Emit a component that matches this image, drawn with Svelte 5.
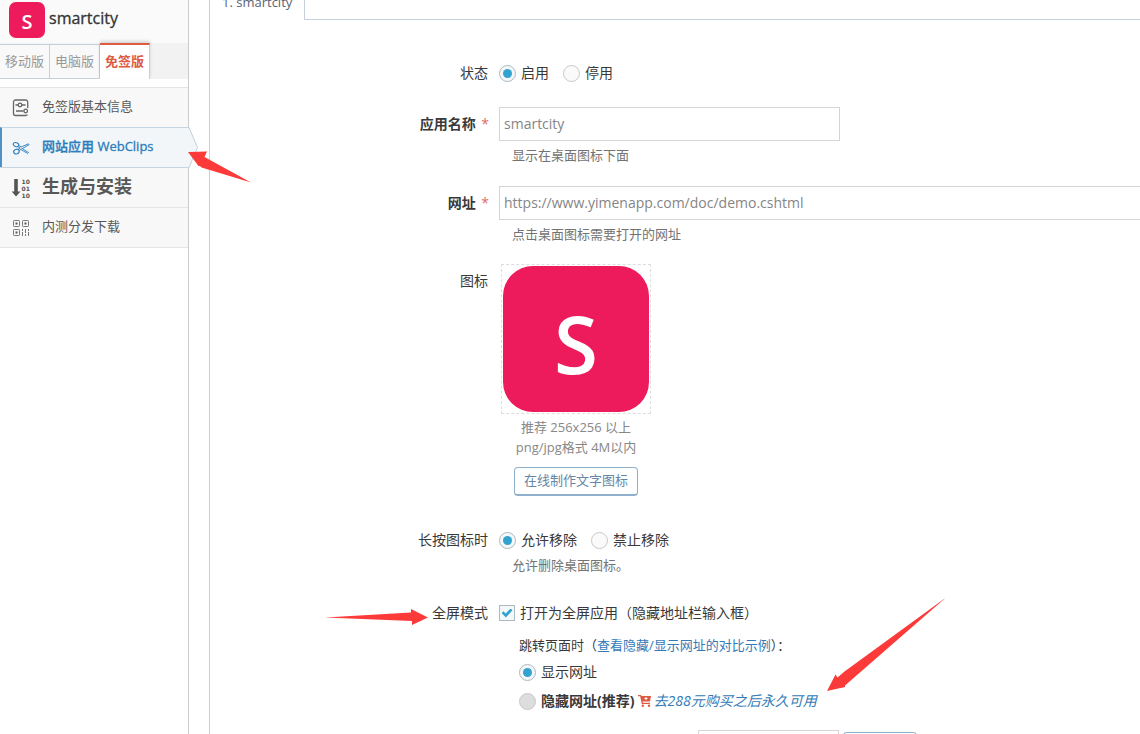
<script>
  let status = $state('on');
  let appName = $state('smartcity');
  let url = $state('https://www.yimenapp.com/doc/demo.cshtml');
  let removable = $state('yes');
  let fullscreen = $state(true);
  let urlMode = $state('show');
  const menu = [
    { id: 'info', text: '免签版基本信息' },
    { id: 'clips', text: '网站应用 WebClips', active: true },
    { id: 'build', text: '生成与安装', big: true },
    { id: 'dist', text: '内测分发下载' }
  ];
</script>

<div class="page">
  <aside>
    <header><span class="logo">S</span><strong>smartcity</strong></header>
    <nav class="platforms">
      <a href="#mobile">移动版</a>
      <a href="#desktop">电脑版</a>
      <a href="#free" class="current">免签版</a>
    </nav>
    <nav class="menu">
      {#each menu as item}
        <a href={'#' + item.id} class:active={item.active} class:big={item.big}>
          {#if item.id === 'info'}
            <svg width="18" height="18" viewBox="0 0 18 18" fill="none" stroke="#666" stroke-width="1.3">
              <path d="M15.700 9V3a2 2 0 0 0-2-2H3.500a2 2 0 0 0-2 2v11.500a2 2 0 0 0 2 2h10.200a2 2 0 0 0 1.700-1M3.500 6h2.700M9.800 6h3.700M4 12h7.500" />
              <circle cx="8" cy="6" r="1.800" /><circle cx="13.700" cy="12" r="1.800" />
            </svg>
          {:else if item.id === 'clips'}
            <svg width="18" height="18" viewBox="0 0 18 18" fill="none" stroke="#2b7dbc" stroke-width="1.1">
              <ellipse cx="4" cy="5.600" rx="2.800" ry="2" transform="rotate(15 4 5.600)" />
              <ellipse cx="4.400" cy="12.600" rx="2.800" ry="2.300" transform="rotate(-20 4.400 12.600)" />
              <path stroke-width=".9" d="M6.700 6.300L9 8l7.500-3.200.5.900L7 11.500M5.500 7.600l2.700 1.300L6 10.500M10.500 9.700l6 3.800-.8.900-6.500-3.600" />
            </svg>
          {:else if item.id === 'build'}
            <svg width="18" height="20" viewBox="0 0 18 20" fill="#555">
              <path d="M2.200 1h3.600v12.500h2.700L4 18.500-.3 13.500h2.500z" />
              <g font-family="DejaVu Sans, sans-serif" font-weight="700" font-size="6">
                <text x="9.500" y="5.500">10</text><text x="9.500" y="12.500">01</text><text x="9.500" y="19.500">10</text>
              </g>
            </svg>
          {:else}
            <svg width="18" height="18" viewBox="0 0 18 18" fill="none" stroke="#777" stroke-width="1">
              <rect x="1.500" y="1.500" width="6" height="6" rx=".8" />
              <rect x="10.500" y="1.500" width="6" height="6" rx=".8" />
              <rect x="1.500" y="10.500" width="6" height="6" rx=".8" />
              <path fill="#555" stroke="none" d="M3.500 3.500h2v2h-2zM12.500 3.500h2v2h-2zM3.500 12.500h2v2h-2z" />
              <path d="M10.500 10v2M10.500 13v4M13.500 10v4M13.500 15v2M16.500 10v2M16.500 13v4" />
            </svg>
          {/if}
          <span>{item.text}</span>
          {#if item.active}
            <svg class="tip" width="11" height="41" viewBox="0 0 11 41"><path d="M0 .5h1l8.500 20L1 40.500H0" fill="#f2f6f9" stroke="#bfd0dd" /></svg>
          {/if}
        </a>
      {/each}
    </nav>
  </aside>

  <main>
    <div class="tabs"><a href="#app1">1. smartcity</a></div>
    <form>
      <div class="row">
        <span class="label">状态</span>
        <div class="field line">
          <label><input type="radio" name="status" value="on" bind:group={status} />启用</label>
          <label><input type="radio" name="status" value="off" bind:group={status} />停用</label>
        </div>
      </div>

      <div class="row named">
        <label class="label strong tall" for="name">应用名称 <i>*</i></label>
        <div class="field">
          <input class="text" id="name" type="text" bind:value={appName} />
          <p class="help">显示在桌面图标下面</p>
        </div>
      </div>

      <div class="row address">
        <label class="label strong tall" for="url">网址 <i>*</i></label>
        <div class="field">
          <input class="text wide" id="url" type="text" bind:value={url} />
          <p class="help">点击桌面图标需要打开的网址</p>
        </div>
      </div>

      <div class="row picture">
        <span class="label tall">图标</span>
        <div class="upload">
          <div class="frame"><span class="logo large">S</span></div>
          <p>推荐 256x256 以上<br />png/jpg格式 4M以内</p>
          <button type="button">在线制作文字图标</button>
        </div>
      </div>

      <div class="row removal">
        <span class="label">长按图标时</span>
        <div class="field">
          <div class="line">
            <label><input type="radio" name="remove" value="yes" bind:group={removable} />允许移除</label>
            <label><input type="radio" name="remove" value="no" bind:group={removable} />禁止移除</label>
          </div>
          <p class="help">允许删除桌面图标。</p>
        </div>
      </div>

      <div class="row screen">
        <span class="label">全屏模式</span>
        <div class="field">
          <label><input type="checkbox" bind:checked={fullscreen} />打开为全屏应用（隐藏地址栏输入框）</label>
          <div class="sub">
            <p>跳转页面时（<a href="#compare">查看隐藏/显示网址的对比示例</a>）：</p>
            <label><input type="radio" name="mode" value="show" bind:group={urlMode} />显示网址</label>
            <div class="buy">
              <label class="strong"><input type="radio" name="mode" value="hide" bind:group={urlMode} disabled />隐藏网址(推荐)</label>
              <svg width="13" height="12" viewBox="0 0 13 12" fill="#dd5a43">
                <path d="M0 0h3l.4 1H13l-1 5.500H4.600l.2 1.300H12V9H3.700L2.200 1.300H0z" />
                <circle cx="4.800" cy="10.700" r="1.200" /><circle cx="11" cy="10.700" r="1.200" />
                <path d="M8 2v3M6.500 3.500h3" stroke="#fff" />
              </svg>
              <a href="#buy">去288元购买之后永久可用</a>
            </div>
            <div class="code">
              <input class="text" type="text" aria-label="code" />
              <button type="button" aria-label="apply"></button>
            </div>
          </div>
        </div>
      </div>
    </form>
  </main>

  <svg class="arrows" width="1140" height="734" viewBox="0 0 1140 734" fill="#fd3a3a">
    <path d="M188 152l19-.5-2.500 5.500L251 182.500l-49.500-15-1.500-1.500-1.500 0z" />
    <path d="M325 617.500l86-5V609l17 8.500-16 7.500v-4z" />
    <path d="M946 597.500L845 685.500l0 1.500-18 4 8.500-16.500 2 3 7-6z" />
  </svg>
</div>

<style>
  :global(body) { margin: 0; background: #fff; }
  * { box-sizing: border-box; }
  .page {
    position: relative;
    display: flex;
    height: 100vh;
    overflow: hidden;
    font: 14px/20px "Open Sans", "Noto Sans CJK SC", sans-serif;
    color: #393939;
  }
  a { color: #337ab7; text-decoration: none; }
  p { margin: 0; }
  aside { flex: 0 0 189px; border-right: 1px solid #ccc; }
  header {
    display: flex;
    align-items: flex-start;
    gap: 4px;
    height: 43px;
    padding: 2px 9px 0;
    background: #fafafa;
  }
  header strong {
    font-size: 16px;
    font-weight: 500;
    line-height: 32px;
    color: #333;
    -webkit-text-stroke: 0.3px #333;
  }
  .logo {
    display: flex;
    align-items: center;
    justify-content: center;
    width: 36px;
    height: 36px;
    padding-top: 3px;
    border-radius: 7px;
    background: #ed1b5b;
    color: #fff;
    font-size: 20px;
    font-weight: 600;
  }
  .platforms { display: flex; height: 36px; background: #f2f2f2; font-size: 13px; }
  .platforms a {
    width: 50px;
    margin-top: 1px;
    border: solid #c5d0dc;
    border-width: 1px 1px 1px 0;
    background: #f9f9f9;
    color: #999;
    line-height: 32px;
    text-align: center;
    white-space: nowrap;
  }
  .platforms .current {
    margin-top: 0;
    border-top: 2px solid #dd5a43;
    border-bottom: 0;
    background: #fff;
    color: #dd5a43;
    font-weight: 700;
    box-shadow: 0 -2px 3px rgba(0, 0, 0, .15);
  }
  .menu { margin-top: 8px; border-bottom: 1px solid #e5e5e5; font-size: 13px; }
  .menu a {
    position: relative;
    display: flex;
    align-items: center;
    gap: 12px;
    height: 40px;
    padding: 0 12px 3px;
    border-top: 1px solid #e5e5e5;
    background: #f8f8f8;
    color: #585858;
    white-space: nowrap;
  }
  .menu a > svg:first-child { flex: 0 0 18px; overflow: visible; margin-top: 3px; }
  .menu .active {
    padding-left: 10px;
    border-left: 2px solid #4f90c6;
    border-top-color: #c5d5e2;
    background: #f2f6f9;
    color: #2b7dbc;
    font-weight: 500;
    -webkit-text-stroke: 0.3px #2b7dbc;
  }
  .menu .big { border-top-color: #c5d5e2; font-size: 18px; font-weight: 700; }
  .tip { position: absolute; left: 100%; top: -1px; }
  main { flex: 1; min-width: 0; margin-left: 20px; border-left: 1px solid #c5d0dc; }
  .tabs { display: flex; height: 20px; border-bottom: 1px solid #c5d0dc; }
  .tabs a {
    height: 20px;
    padding: 0 12px;
    border-right: 1px solid #c5d0dc;
    background: #fff;
    color: #576373;
    font-size: 13px;
    line-height: 4px;
  }
  form { padding-top: 43px; }
  .row { display: grid; grid-template-columns: 30% minmax(0, 1fr); column-gap: 10px; }
  .label { padding-right: 1px; text-align: right; }
  .tall { padding-top: 7px; }
  .strong { font-weight: 700; }
  .label i { margin-left: 2px; color: #e06a6a; font-style: normal; font-weight: 400; }
  .label.strong { padding-right: 0; }
  .line { display: flex; gap: 14px; }
  .field label { display: flex; align-items: center; gap: 5px; }
  .named { margin-top: 24px; }
  .address { margin-top: 21px; }
  .picture { margin-top: 20px; }
  .removal { margin-top: 34px; }
  .screen { margin-top: 28px; }
  .text {
    display: block;
    width: 341px;
    max-width: 100%;
    height: 34px;
    padding: 0 4px 2px;
    border: 1px solid #d5d5d5;
    border-radius: 0;
    background: #fff;
    color: #858585;
    font: inherit;
  }
  .wide { width: calc(100% + 2px); max-width: none; }
  .help { padding: 4px 0 0 13px; color: #737373; font-size: 13px; }
  .removal .help { padding-top: 5px; }
  input[type='radio'], input[type='checkbox'] {
    appearance: none;
    display: grid;
    place-items: center;
    width: 17px;
    height: 17px;
    margin: 0;
    border: 1px solid #c8c8c8;
    border-radius: 50%;
    background: #fafafa;
  }
  input[type='checkbox'] { width: 16px; height: 16px; border-radius: 0; }
  input[type='radio']:checked, input[type='checkbox']:checked { border-color: #adb8c0; background: #f4f8fb; }
  input[type='radio']:checked::before {
    content: '';
    width: 9px;
    height: 9px;
    border-radius: 50%;
    background: #32a3ce;
  }
  input[type='checkbox']:checked::before {
    content: '';
    width: 11px;
    height: 9px;
    background: #32a3ce;
    clip-path: polygon(0 50%, 18% 30%, 38% 55%, 82% 0, 100% 20%, 40% 100%);
  }
  input[type='radio']:disabled { background: #ddd; }
  .upload {
    display: flex;
    flex-direction: column;
    align-items: center;
    width: 150px;
    margin-left: 2px;
    color: #888;
    font-size: 13px;
    text-align: center;
    white-space: nowrap;
  }
  .frame { width: 150px; height: 150px; padding: 1px; border: 1px dashed #ddd; }
  .large { width: 146px; height: 146px; padding-top: 8px; border-radius: 30px; font-size: 80px; }
  .upload p { padding-top: 3px; }
  button {
    border: 1px solid #8fb0cc;
    border-bottom-width: 2px;
    border-radius: 4px;
    background: #fff;
    color: #6688a6;
    font: inherit;
  }
  .upload button { height: 29px; margin-top: 10px; padding: 0 9px 2px; }
  .sub { padding: 12px 0 0 20px; }
  .sub p { margin-bottom: 7px; font-size: 13px; }
  .buy { display: flex; align-items: center; gap: 4px; margin-top: 9px; }
  .buy label { margin-right: -1px; }
  .buy a { margin-left: -1px; font-style: italic; }
  .code { display: flex; gap: 4px; margin: 19px 0 0 179px; }
  .code .text { width: 141px; }
  .code button { width: 74px; height: 34px; margin-top: 2px; }
  .arrows { position: absolute; left: 0; top: 0; pointer-events: none; }
</style>
